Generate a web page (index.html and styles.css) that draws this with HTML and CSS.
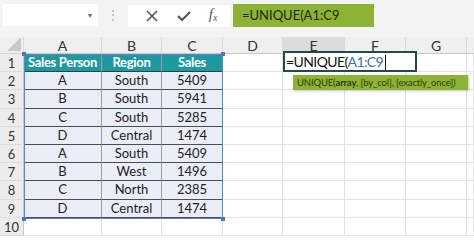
FILE: index.html
```html
<!DOCTYPE html>
<html>
<head>
<meta charset="utf-8">
<link rel="stylesheet" href="styles.css">
</head>
<body>
<div class="app">
  <div class="toolbar">
    <div class="namebox"><span class="caret">&#9662;</span></div>
    <div class="grip">&#8942;</div>
    <div class="fxbox">
      <svg class="ico" width="14" height="14" viewBox="0 0 14 14"><path d="M2 2 L12 12 M12 2 L2 12" stroke="#555" stroke-width="1.6" fill="none"/></svg>
      <svg class="ico" width="16" height="14" viewBox="0 0 16 14"><path d="M2 7 L6 11 L14 3" stroke="#555" stroke-width="2" fill="none"/></svg>
      <span class="fx">f<sub>x</sub></span>
    </div>
    <div class="formula">=UNIQUE(A1:C9</div>
  </div>
  <div class="sheet">
    <div class="corner"><svg width="14" height="14" viewBox="0 0 14 14"><path d="M14 0 L14 14 L0 14 Z" fill="#c8c8c8"/></svg></div>
    <div class="ch">A</div><div class="ch">B</div><div class="ch">C</div><div class="ch">D</div><div class="ch sel">E</div><div class="ch">F</div><div class="ch">G</div><div class="ch last"></div>

    <div class="rh">1</div><div class="c hd">Sales Person</div><div class="c hd">Region</div><div class="c hd">Sales</div><div class="e"></div><div class="e"></div><div class="e"></div><div class="e"></div><div class="e"></div>
    <div class="rh">2</div><div class="c">A</div><div class="c">South</div><div class="c">5409</div><div class="e"></div><div class="e"></div><div class="e"></div><div class="e"></div><div class="e"></div>
    <div class="rh">3</div><div class="c">B</div><div class="c">South</div><div class="c">5941</div><div class="e"></div><div class="e"></div><div class="e"></div><div class="e"></div><div class="e"></div>
    <div class="rh">4</div><div class="c">C</div><div class="c">South</div><div class="c">5285</div><div class="e"></div><div class="e"></div><div class="e"></div><div class="e"></div><div class="e"></div>
    <div class="rh">5</div><div class="c">D</div><div class="c">Central</div><div class="c">1474</div><div class="e"></div><div class="e"></div><div class="e"></div><div class="e"></div><div class="e"></div>
    <div class="rh">6</div><div class="c">A</div><div class="c">South</div><div class="c">5409</div><div class="e"></div><div class="e"></div><div class="e"></div><div class="e"></div><div class="e"></div>
    <div class="rh">7</div><div class="c">B</div><div class="c">West</div><div class="c">1496</div><div class="e"></div><div class="e"></div><div class="e"></div><div class="e"></div><div class="e"></div>
    <div class="rh">8</div><div class="c">C</div><div class="c">North</div><div class="c">2385</div><div class="e"></div><div class="e"></div><div class="e"></div><div class="e"></div><div class="e"></div>
    <div class="rh">9</div><div class="c">D</div><div class="c">Central</div><div class="c">1474</div><div class="e"></div><div class="e"></div><div class="e"></div><div class="e"></div><div class="e"></div>
    <div class="rh r10">10</div><div class="e"></div><div class="e"></div><div class="e"></div><div class="e"></div><div class="e"></div><div class="e"></div><div class="e"></div><div class="e"></div>

    <div class="range"><i class="h1"></i><i class="h2"></i><i class="h3"></i><i class="h4"></i></div>
    <div class="editor">=UNIQUE(<span class="ref">A1:C9</span><span class="cursor"></span></div>
    <div class="tip">UNIQUE(<b>array</b>, [by_col], [exactly_once])</div>
  </div>
</div>
</body>
</html>
```
FILE: styles.css
```css
html, body { margin: 0; padding: 0; }
body { width: 474px; height: 236px; overflow: hidden; background: #fff; font-family: Lato, "Open Sans", sans-serif; }
.app { width: 474px; display: block; }
.toolbar { height: 37px; background: #f4f4f4; display: flex; align-items: flex-start; padding: 4px 0 0 3px; box-sizing: border-box; }
.namebox { width: 95px; height: 22px; background: #fff; box-sizing: border-box; display: flex; align-items: center; justify-content: flex-end; padding-right: 6px; }
.caret { font-size: 8px; color: #666; }
.grip { width: 30px; text-align: center; color: #aaa; font-size: 12px; line-height: 22px; }
.fxbox { width: 102px; height: 22px; margin-top: 1px; background: #fff; display: flex; align-items: center; justify-content: space-around; padding: 0 4px 0 8px; box-sizing: border-box; }
.fx { font-family: "Liberation Serif", serif; font-style: italic; color: #555; font-size: 15px; line-height: 14px; }
.fx sub { font-size: 10px; vertical-align: -2px; }
.formula { width: 141px; height: 23px; margin-left: 3px; background: #8cb334; color: #1d2a0a; font-size: 13px; line-height: 23px; padding-left: 9px; box-sizing: border-box; }
.sheet { position: relative; display: grid; grid-template-columns: 24px 78px 60px 61px 60px 62px 61px 61px 7px; grid-template-rows: 17px repeat(9, 18.2px) 18px; }
.corner { background: #efefef; border-right: 1px solid #dadada; border-bottom: 1px solid #d4d4d4; display: flex; align-items: flex-end; justify-content: flex-end; padding: 0 2px 2px 0; box-sizing: border-box; }
.ch { background: #efefef; border-right: 1px solid #dadada; border-bottom: 1px solid #c6c6c6; font-size: 14px; color: #333; text-align: center; line-height: 18px; box-sizing: border-box; }
.ch.sel { background: #dcdcdc; }
.ch.last { border-right: none; }
.rh { background: #ececec; border-right: 1px solid #c6c6c6; border-bottom: 1px solid #dcdcdc; font-size: 13px; color: #333; text-align: center; line-height: 18px; box-sizing: border-box; }
.c { background: #e9edf6; border-right: 1px solid #9a9ea6; border-bottom: 1px solid #4a4d52; font-size: 13px; color: #222; text-align: center; line-height: 17px; box-sizing: border-box; white-space: nowrap; overflow: hidden; }
.c.hd { background: #1c9aa0; color: #fff; font-weight: bold; border-bottom: 1px solid #3c3c3c; letter-spacing: -0.3px; }
.e { background: #fff; border-right: 1px solid #e2e2e2; border-bottom: 1px solid #e2e2e2; box-sizing: border-box; }
.range { position: absolute; left: 24px; top: 17px; width: 199px; height: 165px; border: 1px solid #5b86c8; box-sizing: border-box; pointer-events: none; }
.range i { position: absolute; width: 4px; height: 4px; background: #4a78c0; }
.range .h1 { left: -3px; top: -3px; }
.range .h2 { right: -3px; top: -3px; }
.range .h3 { left: -3px; bottom: -3px; }
.range .h4 { right: -3px; bottom: -3px; }
.editor { position: absolute; left: 283px; top: 14px; width: 134px; height: 21px; border: 2px solid #1e4c4c; background: #fff; box-sizing: border-box; font-size: 14px; line-height: 17px; color: #111; padding-left: 1px; white-space: nowrap; letter-spacing: -0.6px; }
.ref { color: #3f6fc0; }
.cursor { display: inline-block; width: 1px; height: 15px; margin-left: 2px; background: #111; vertical-align: -3px; }
.tip { position: absolute; left: 293px; top: 38px; width: 175px; height: 15px; background: #8cb334; color: #2c3d0c; font-size: 9.5px; line-height: 15px; padding-left: 4px; box-sizing: border-box; white-space: nowrap; letter-spacing: -0.15px; box-shadow: 1px 1px 2px rgba(0,0,0,0.25); }
.tip b { font-weight: bold; }
```
